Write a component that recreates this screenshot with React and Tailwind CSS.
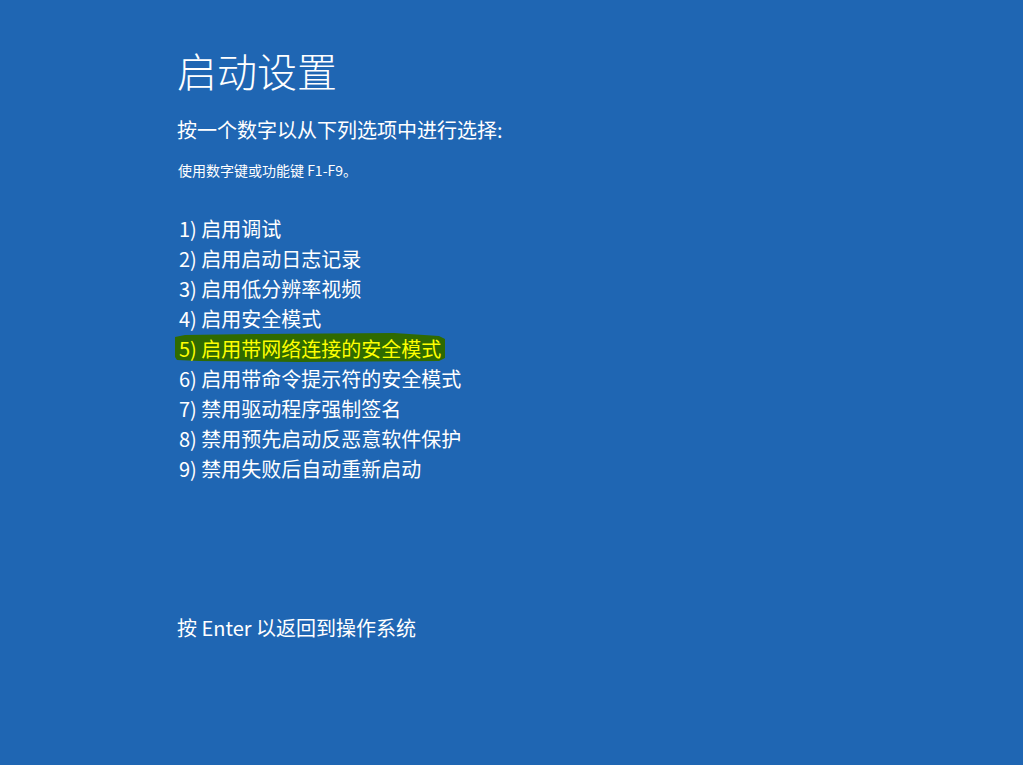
const FONT = 'font-["Noto_Sans_CJK_SC","Noto_Sans",sans-serif]';

const options = [
  '启用调试',
  '启用启动日志记录',
  '启用低分辨率视频',
  '启用安全模式',
  '启用带网络连接的安全模式',
  '启用带命令提示符的安全模式',
  '禁用驱动程序强制签名',
  '禁用预先启动反恶意软件保护',
  '禁用失败后自动重新启动',
];

function Marker() {
  // green highlighter stroke behind the selected option
  return (
    <svg
      className="absolute left-[-5px] top-[-2px]"
      width="274"
      height="32"
      viewBox="0 0 274 32"
    >
      <polygon
        fill="#2f6a00"
        points="1,5 11,3 85,2 220,1 265,4 271,7 271,26 265,29 125,30 25,29 3,28 1,25"
      />
    </svg>
  );
}

export default function App() {
  return (
    <div className={`w-full h-[765px] bg-[#1f66b3] text-white pl-[177px] pt-[46px] flex flex-col ${FONT}`}>
      {/* Title */}
      <h1 className="text-[40px] leading-[48px] font-light">启动设置</h1>

      <p className="mt-[21px] text-[20px] leading-[30px]">按一个数字以从下列选项中进行选择:</p>

      <p className="mt-[15px] ml-[1px] text-[14px] leading-[20px]">使用数字键或功能键 F1-F9。</p>

      {/* Options */}
      <ul className="mt-[34px] ml-[2px] text-[20px] leading-[30px]">
        {options.map((label, i) => (
          <li key={i}>
            {i === 4 ? (
              <span className="relative inline-block">
                <Marker />
                <span className="relative text-[#ffff00]">
                  {i + 1}) {label}
                </span>
              </span>
            ) : (
              <span>
                {i + 1}) {label}
              </span>
            )}
          </li>
        ))}
      </ul>

      <p className="mt-[129px] text-[20px] leading-[30px]">按 Enter 以返回到操作系统</p>
    </div>
  );
}
